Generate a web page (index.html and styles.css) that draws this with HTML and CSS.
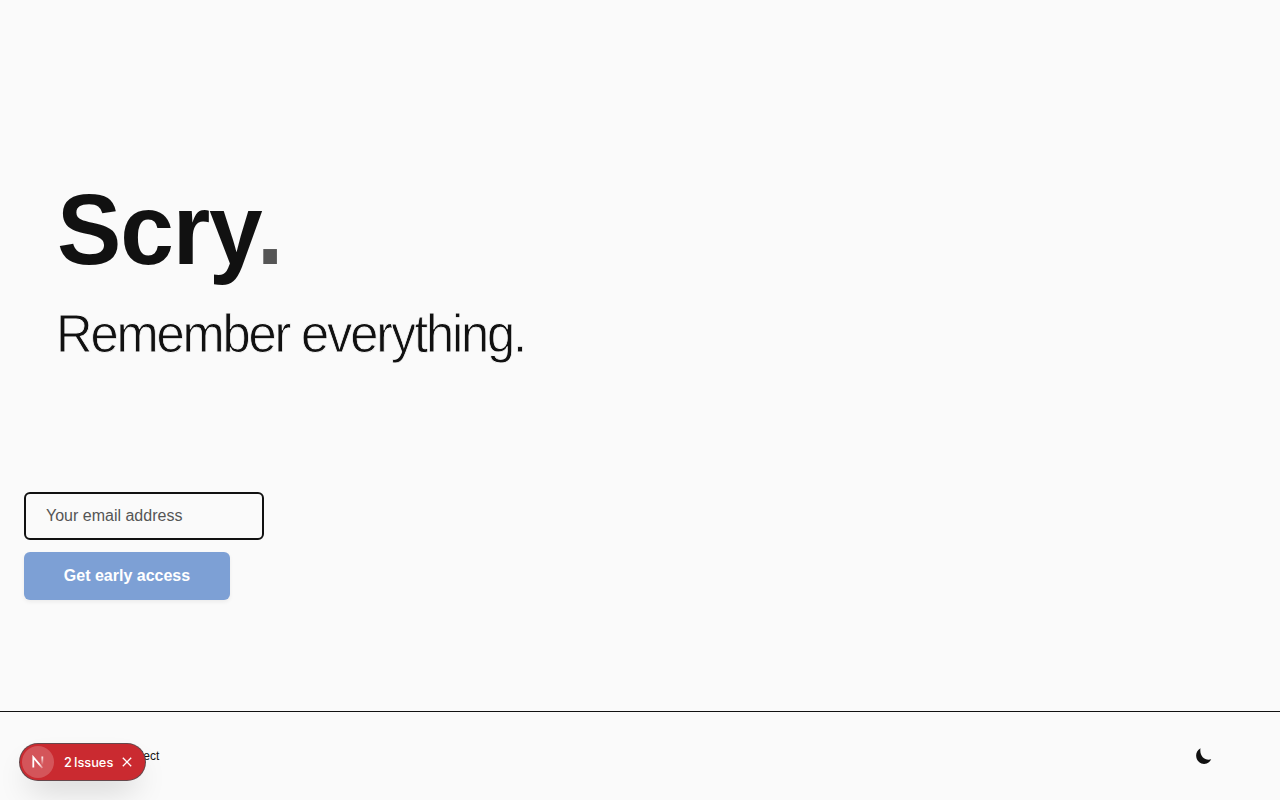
FILE: index.html
```html
<!DOCTYPE html>
<html lang="en">
<head>
<meta charset="utf-8">
<title>Scry</title>
<link rel="stylesheet" href="styles.css">
</head>
<body>
<div class="page">
  <main class="main">
    <div class="hero">
      <h1 class="title">Scry<span class="dot">.</span></h1>
      <p class="tagline">Remember everything.</p>
    </div>
    <form class="signup">
      <input class="email" type="email" placeholder="Your email address">
      <button class="submit" type="button">Get early access</button>
    </form>
  </main>
  <footer class="footer">
    <span class="credit">Project</span>
    <svg class="moon" width="16" height="16" viewBox="0 0 16 16"><path d="M4.500.3C-1 3.300-1 10.300 2.800 13.800 6.500 17.400 13 16.200 15.200 11.300 8.800 13.200 3.200 7.600 4.500.3Z" fill="#111"/></svg>
  </footer>
</div>
<div class="issues">
  <span class="mark"><svg width="14" height="14" viewBox="0 0 14 14" fill="none"><defs><linearGradient id="a" x1="2" y1="1" x2="12" y2="14" gradientUnits="userSpaceOnUse"><stop offset=".6" stop-color="#fff"/><stop offset="1" stop-color="#fff" stop-opacity=".1"/></linearGradient><linearGradient id="b" x1="0" y1="1" x2="0" y2="10" gradientUnits="userSpaceOnUse"><stop stop-color="#fff"/><stop offset="1" stop-color="#fff" stop-opacity="0"/></linearGradient></defs><path d="M2.300 12.500V2.200L11.400 13" stroke="url(#a)" stroke-width="1.8"/><path d="M11.300 1.500v8.500" stroke="url(#b)" stroke-width="1.8"/></svg></span>
  <span class="count"><span>2</span><span class="word">Issues</span></span>
  <svg class="close" width="10" height="10" viewBox="0 0 10 10"><path d="M.8.8l8.4 8.4M9.2.8L.8 9.2" stroke="#fff" stroke-width="1.3"/></svg>
</div>
</body>
</html>
```
FILE: styles.css
```css
* { box-sizing: border-box; }
body { margin: 0; background: #fafafa; color: #111; font-family: "Liberation Sans", Arial, sans-serif; }
.page { height: 800px; display: flex; flex-direction: column; overflow: hidden; }
.main { flex: 1; padding: 179px 24px 0; }
.hero { height: 313px; padding-left: 31px; }
.title { margin: 0 0 0 2px; font-size: 101px; line-height: 100px; font-weight: 700; letter-spacing: -1.2px; white-space: nowrap; transform: scaleX(.955); transform-origin: left; }
.dot { color: #555; margin-left: -5px; }
.tagline { margin: 25px 0 0 1px; font-size: 53px; line-height: 60px; letter-spacing: -2.250px; white-space: nowrap; -webkit-text-stroke: .8px #fafafa; transform: scaleX(.955); transform-origin: left; }
.signup { display: flex; flex-direction: column; align-items: flex-start; gap: 12px; }
.email { width: 240px; height: 48px; padding: 0 20px; border: 2px solid #111; border-radius: 6px; background: #fafafa; font: 16px "Liberation Sans", Arial, sans-serif; outline: 0; }
.email::placeholder { color: #555; opacity: 1; }
.submit { width: 206px; height: 48px; padding: 0; border: 0; border-radius: 6px; background: #7da0d5; color: #fff; font: 700 16px "Liberation Sans", Arial, sans-serif; box-shadow: 0 2px 4px rgba(0,0,0,.06); }
.footer { height: 89px; border-top: 1px solid #111; padding: 0 68px 0 122px; display: flex; align-items: center; justify-content: space-between; font-size: 12px; }
.issues { position: absolute; left: 20px; top: 744px; width: 125px; height: 36px; border-radius: 18px; background: #ca2a30; color: #fff; display: flex; align-items: center; padding-left: 2px; font: 500 12.8px Inter, sans-serif; box-shadow: 0 0 0 1px #65484c, 0 16px 32px -8px rgba(0,0,0,.2); }
.mark { width: 32px; height: 32px; border-radius: 50%; background: #d4555a; display: flex; align-items: center; justify-content: center; }
.count { display: flex; gap: 2px; margin-left: 10px; width: 58px; }
```
